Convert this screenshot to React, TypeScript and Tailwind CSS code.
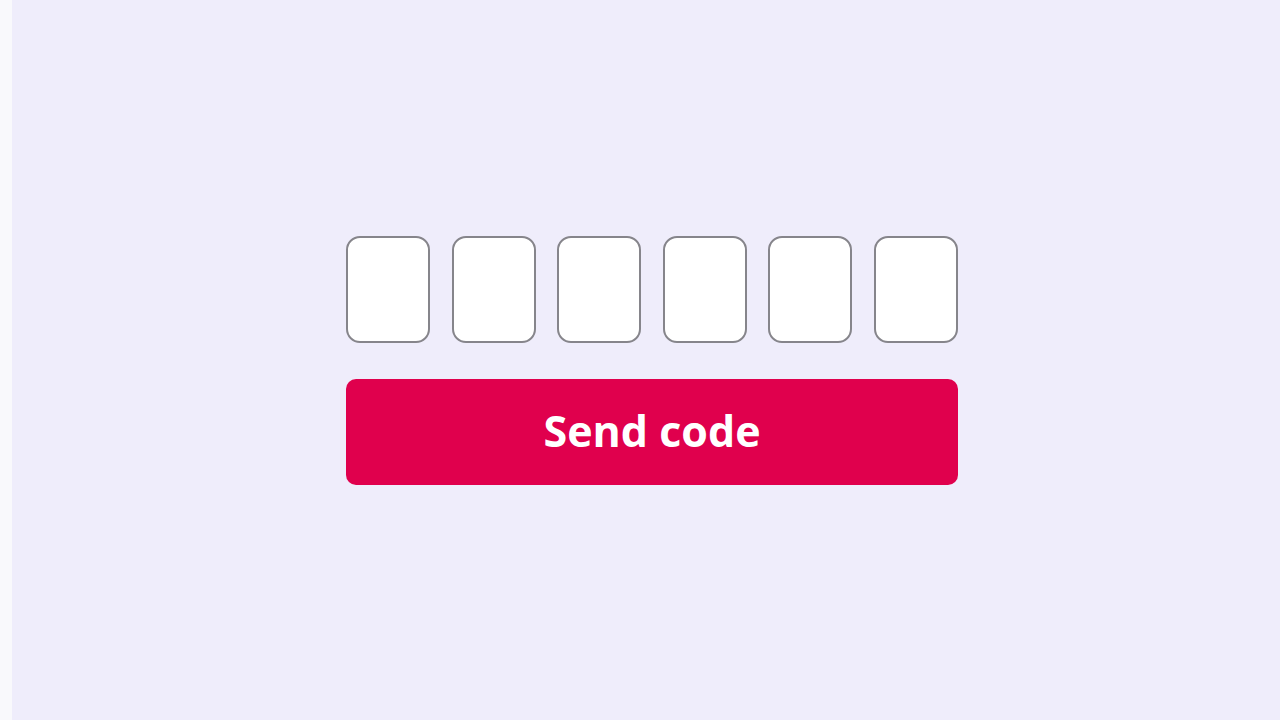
import React from "react";

export default function App() {
  return (
    <div className="flex h-[720px] w-[1280px] bg-[#efedfb]">
      <div className="w-[12px] shrink-0 bg-[#f9f9fc]" />
      <div className="flex flex-1 items-center justify-center pl-[12px]">
        <div className="flex w-[612px] flex-col gap-[36px]">
          <div className="flex justify-between">
            {[0, 1, 2, 3, 4, 5].map((i) => (
              <div
                key={i}
                className="h-[107px] w-[84px] rounded-[14px] border-2 border-[#86858b] bg-white"
              />
            ))}
          </div>
          <button className="flex h-[106px] w-full items-center justify-center rounded-[10px] bg-[#e0004d] text-[43px] font-bold text-white [font-family:'Open_Sans',sans-serif]">
            Send code
          </button>
        </div>
      </div>
    </div>
  );
}
